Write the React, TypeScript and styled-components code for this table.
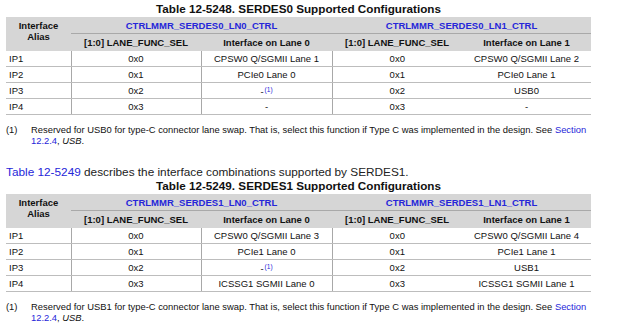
import styled, { createGlobalStyle } from "styled-components";

const GlobalStyle = createGlobalStyle`
  body {
    margin: 0;
    background: #fff;
    font-family: "Liberation Sans", Arial, sans-serif;
    color: #111;
  }
`

const LINK = "#2626d9"

type Row = [string, string, string, string, string]

interface SerdesTable {
  number: string
  serdes: string
  usb: string
  rows: Row[]
}

const tables: SerdesTable[] = [
  {
    number: "12-5248",
    serdes: "SERDES0",
    usb: "USB0",
    rows: [
      ["IP1", "0x0", "CPSW0 Q/SGMII Lane 1", "0x0", "CPSW0 Q/SGMII Lane 2"],
      ["IP2", "0x1", "PCIe0 Lane 0", "0x1", "PCIe0 Lane 1"],
      ["IP3", "0x2", "-", "0x2", "USB0"],
      ["IP4", "0x3", "-", "0x3", "-"],
    ],
  },
  {
    number: "12-5249",
    serdes: "SERDES1",
    usb: "USB1",
    rows: [
      ["IP1", "0x0", "CPSW0 Q/SGMII Lane 3", "0x0", "CPSW0 Q/SGMII Lane 4"],
      ["IP2", "0x1", "PCIe1 Lane 0", "0x1", "PCIe1 Lane 1"],
      ["IP3", "0x2", "-", "0x2", "USB1"],
      ["IP4", "0x3", "ICSSG1 SGMII Lane 0", "0x3", "ICSSG1 SGMII Lane 1"],
    ],
  },
]

const Page = styled.main`
  display: flex;
  flex-direction: column;
  width: 585px;
  padding: 2px 0 0 6px;
`

const Table = styled.table`
  width: 585px;
  table-layout: fixed;
  border-collapse: collapse;
  font-size: 9.5px;
`

const Caption = styled.caption`
  font-size: 11.7px;
  font-weight: 700;
  line-height: 14px;
  padding-bottom: 1px;
  color: #111;
`

const HeadCell = styled.th<{ $tall?: boolean; $split?: boolean }>`
  background: #d6d6d6;
  font-weight: 700;
  height: ${p => (p.$tall ? "16px" : "17px")};
  padding: 0;
  line-height: 11px;
  text-align: center;
  vertical-align: middle;
  border-bottom: ${p => (p.$split ? "1px solid #a9a9a9" : "none")};
`

const AliasHead = styled(HeadCell)`
  vertical-align: top;
  padding-top: 3px;
`

const RegName = styled.span`
  color: ${LINK};
`

const Cell = styled.td<{ $left?: boolean; $divide?: boolean }>`
  height: 15px;
  padding: 0 0 0 ${p => (p.$left ? "3px" : "0")};
  text-align: ${p => (p.$left ? "left" : "center")};
  line-height: 11px;
  border-bottom: 1px solid #bdbdbd;
  border-right: ${p => (p.$divide ? "1px solid #a8a8a8" : "none")};
  white-space: nowrap;
`

const Mark = styled.sup`
  color: ${LINK};
  font-size: 6.5px;
  vertical-align: 3px;
  margin-left: 1px;
`

const Footnote = styled.div<{ $gap: number }>`
  display: flex;
  margin-top: ${p => p.$gap}px;
  font-size: 9.4px;
  line-height: 11px;
  color: #111;
`

const NoteNum = styled.span`
  flex: 0 0 25px;
`

const NoteText = styled.p`
  margin: 0;
  width: 562px;
`

const Link = styled.span`
  color: ${LINK};
`

const Lead = styled.p`
  margin: 20px 0 0;
  font-size: 11.8px;
  line-height: 13px;
  color: #222;
`

const SerdesConfig = ({ t }: { t: SerdesTable }) => (
  <Table>
    <Caption>Table {t.number}. {t.serdes} Supported Configurations</Caption>
    <colgroup>
      <col style={{ width: 65 }} />
      <col style={{ width: 130 }} />
      <col style={{ width: 131 }} />
      <col style={{ width: 130 }} />
      <col style={{ width: 129 }} />
    </colgroup>
    <thead>
      <tr>
        <AliasHead rowSpan={2}>Interface<br />Alias</AliasHead>
        <HeadCell $tall $split colSpan={2}>
          <RegName>CTRLMMR_{t.serdes}_LN0_CTRL</RegName>
        </HeadCell>
        <HeadCell $tall $split colSpan={2}>
          <RegName>CTRLMMR_{t.serdes}_LN1_CTRL</RegName>
        </HeadCell>
      </tr>
      <tr>
        <HeadCell>[1:0] LANE_FUNC_SEL</HeadCell>
        <HeadCell>Interface on Lane 0</HeadCell>
        <HeadCell>[1:0] LANE_FUNC_SEL</HeadCell>
        <HeadCell>Interface on Lane 1</HeadCell>
      </tr>
    </thead>
    <tbody>
      {t.rows.map(r => (
        <tr key={r[0]}>
          <Cell $left $divide>{r[0]}</Cell>
          <Cell $divide>{r[1]}</Cell>
          <Cell $divide>
            {r[2]}
            {r[0] === "IP3" && <Mark>(1)</Mark>}
          </Cell>
          <Cell>{r[3]}</Cell>
          <Cell>{r[4]}</Cell>
        </tr>
      ))}
    </tbody>
  </Table>
)

const Note = ({ usb, gap }: { usb: string; gap: number }) => (
  <Footnote $gap={gap}>
    <NoteNum>(1)</NoteNum>
    <NoteText>
      Reserved for {usb} for type-C connector lane swap. That is, select this function if Type C was
      implemented in the design. See <Link>Section</Link> <Link>12.2.4</Link>, <i>USB</i>.
    </NoteText>
  </Footnote>
)

const App = () => {
  return (
    <>
      <GlobalStyle />
      <Page>
        <SerdesConfig t={tables[0]} />
        <Note usb={tables[0].usb} gap={9} />
        <Lead>
          <Link>Table 12-5249</Link> describes the interface combinations supported by SERDES1.
        </Lead>
        <SerdesConfig t={tables[1]} />
        <Note usb={tables[1].usb} gap={9} />
      </Page>
    </>
  )
}

export default App
